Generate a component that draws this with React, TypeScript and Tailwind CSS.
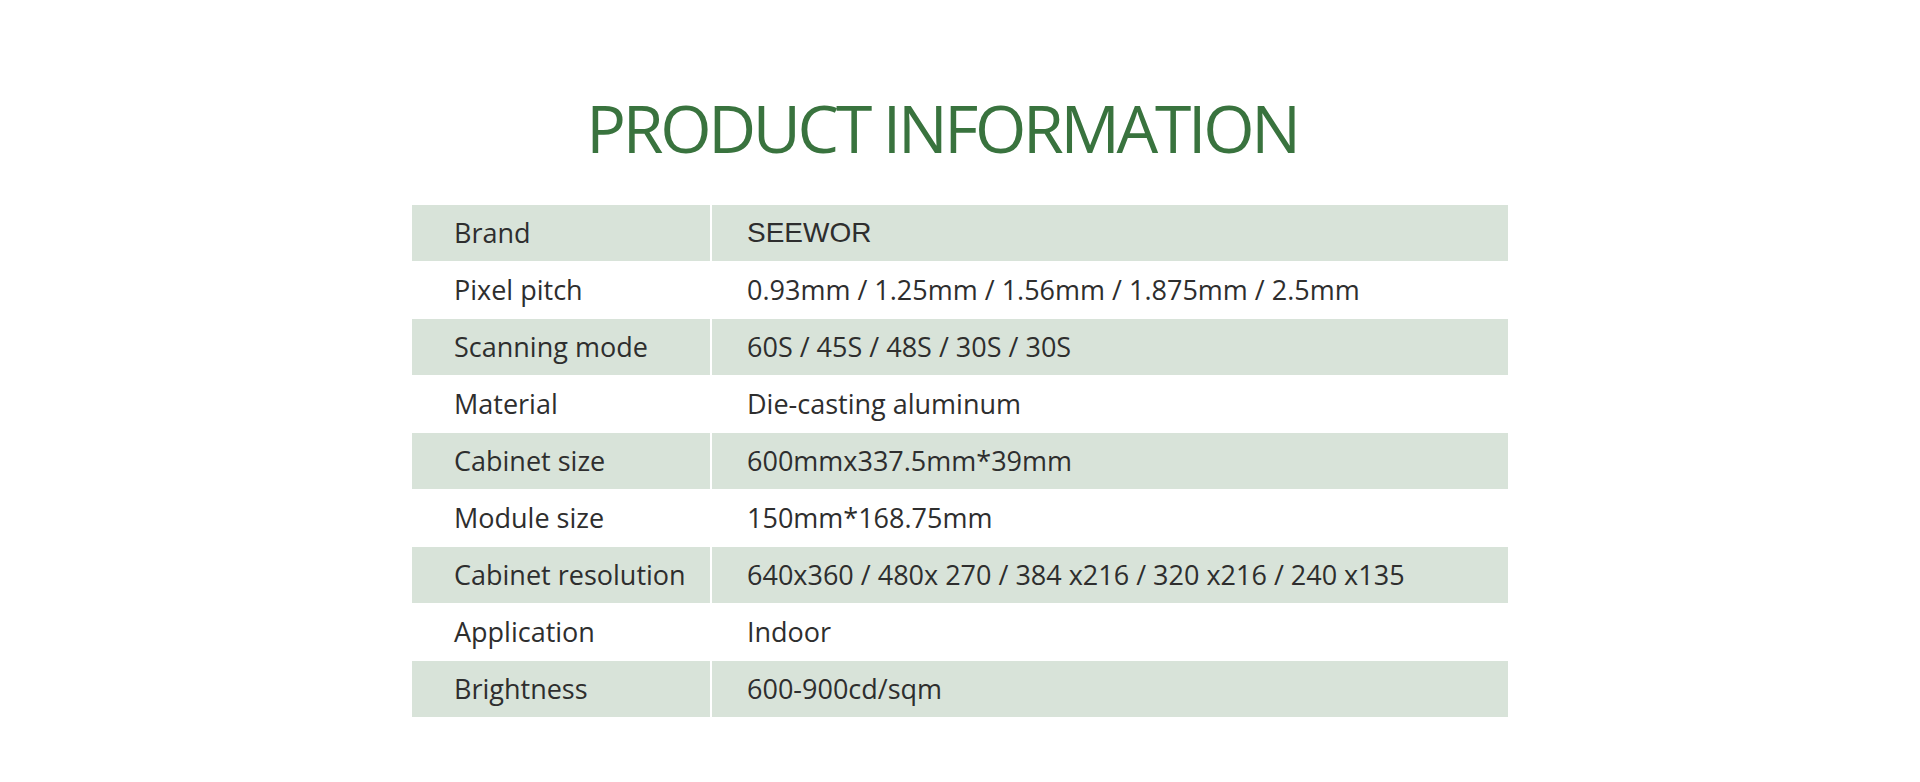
import React from 'react';

const specs: { label: string; value: string }[] = [
  { label: 'Brand', value: 'SEEWOR' },
  { label: 'Pixel pitch', value: '0.93mm / 1.25mm / 1.56mm / 1.875mm / 2.5mm' },
  { label: 'Scanning mode', value: '60S / 45S / 48S / 30S / 30S' },
  { label: 'Material', value: 'Die-casting aluminum' },
  { label: 'Cabinet size', value: '600mmx337.5mm*39mm' },
  { label: 'Module size', value: '150mm*168.75mm' },
  { label: 'Cabinet resolution', value: '640x360 / 480x 270 / 384 x216 / 320 x216 / 240 x135' },
  { label: 'Application', value: 'Indoor' },
  { label: 'Brightness', value: '600-900cd/sqm' }
];

function SpecRow({ label, value, shaded }: { label: string; value: string; shaded: boolean }) {
  const isBrand = label === 'Brand';

  return (
    <div
      className={
        shaded
          ? 'flex h-[57px] border-b border-white bg-[#d8e3d9]'
          : 'flex h-[57px]'
      }
    >
      <div className="flex w-[298px] items-center pl-[42px]">
        <span className="text-[27px] text-[#2e2e2e]">{label}</span>
      </div>
      <div className="w-[2px] bg-white" />
      <div className="flex flex-1 items-center pl-[35px]">
        {isBrand ? (
          <span className="font-['Liberation_Sans',Arial,sans-serif] text-[28px] text-[#2e2e2e]">
            {value}
          </span>
        ) : (
          <span className="text-[27px] text-[#2e2e2e]">{value}</span>
        )}
      </div>
    </div>
  );
}

export default function App() {
  return (
    <div className="min-h-[782px] w-full bg-white font-['Open_Sans','Noto_Sans',sans-serif]">
      <div className="flex justify-center pt-[81px] pr-[36px]">
        <h1 className="text-[66px] leading-[92px] tracking-[-0.05em] text-[#39733e]">
          PRODUCT INFORMATION
        </h1>
      </div>
      <div className="mx-auto mt-[32px] flex w-[1096px] flex-col">
        {specs.map((spec, i) => (
          <SpecRow key={spec.label} label={spec.label} value={spec.value} shaded={i % 2 === 0} />
        ))}
      </div>
    </div>
  );
}
